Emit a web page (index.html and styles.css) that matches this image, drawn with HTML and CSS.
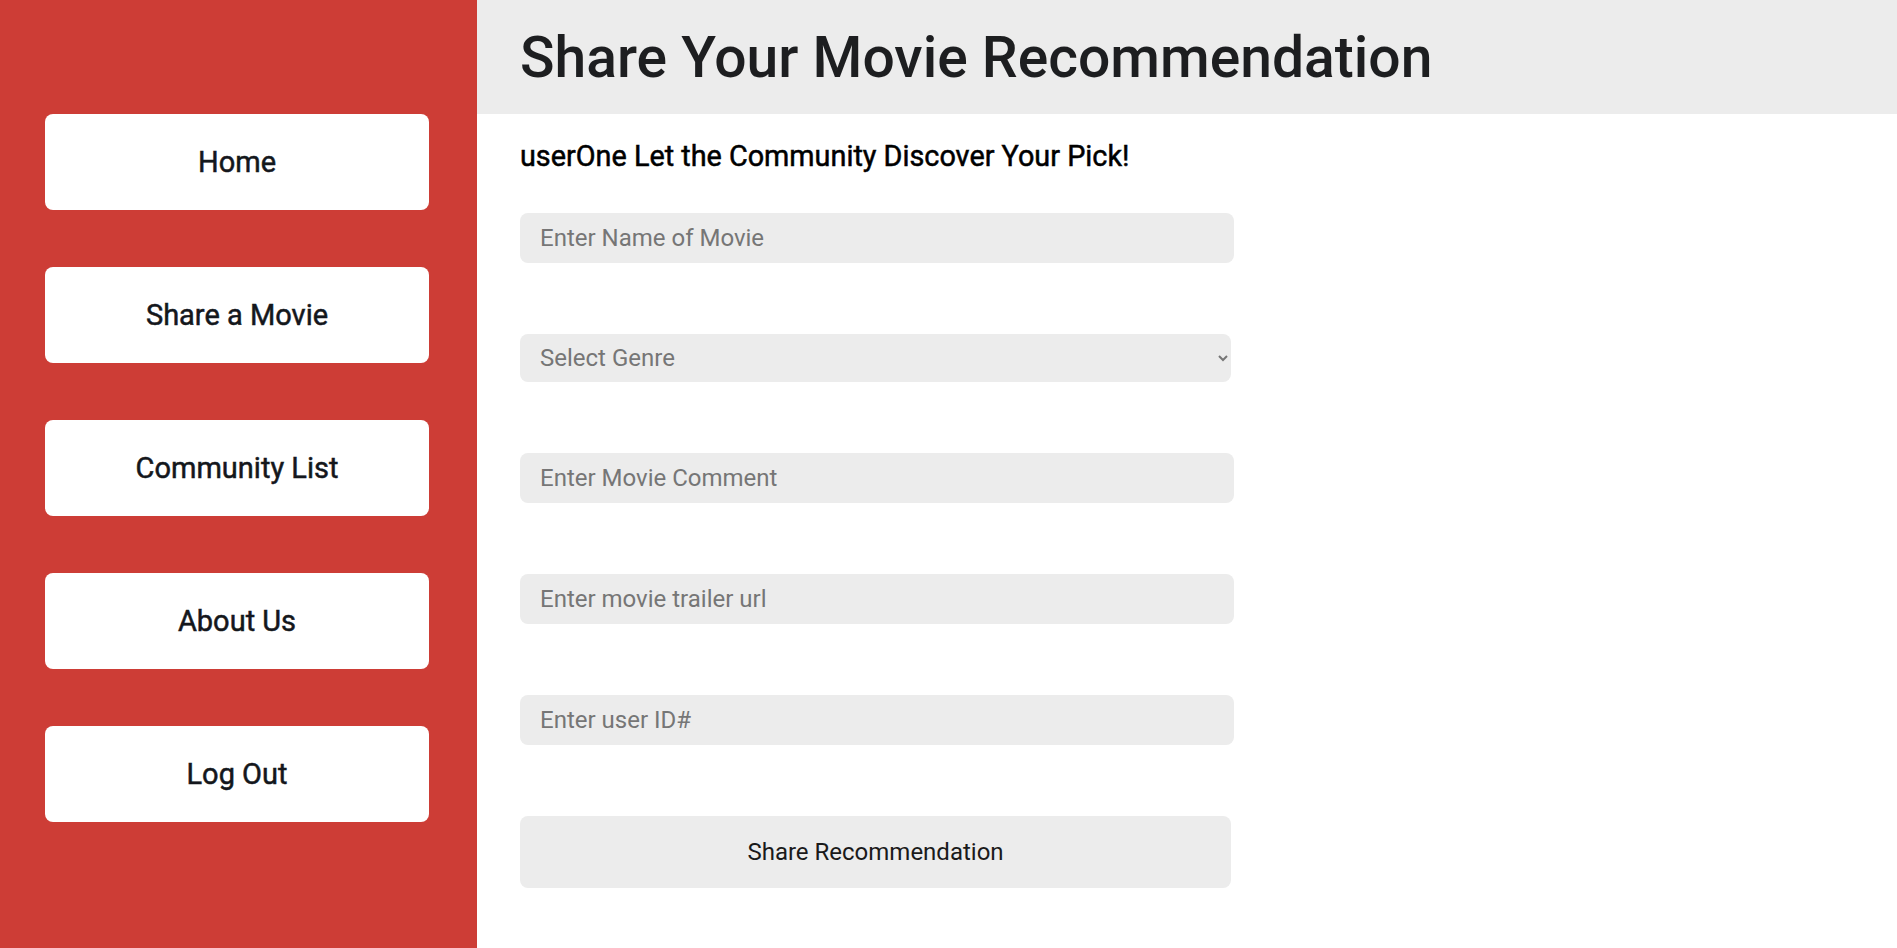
FILE: index.html
```html
<!DOCTYPE html>
<html lang="en">
<head>
<meta charset="utf-8">
<title>Share Your Movie Recommendation</title>
<link rel="stylesheet" href="styles.css">
</head>
<body>
<div class="layout">
  <nav class="sidebar">
    <a class="nav-btn" href="#">Home</a>
    <a class="nav-btn" href="#">Share a Movie</a>
    <a class="nav-btn" href="#">Community List</a>
    <a class="nav-btn" href="#">About Us</a>
    <a class="nav-btn" href="#">Log Out</a>
  </nav>
  <main class="main">
    <header class="page-header">
      <h1 class="title">Share Your Movie Recommendation</h1>
    </header>
    <section class="content">
      <h2 class="subtitle">userOne Let the Community Discover Your Pick!</h2>
      <form class="form">
        <input class="field" type="text" placeholder="Enter Name of Movie">
        <select class="field select">
          <option>Select Genre</option>
        </select>
        <input class="field" type="text" placeholder="Enter Movie Comment">
        <input class="field" type="text" placeholder="Enter movie trailer url">
        <input class="field" type="text" placeholder="Enter user ID#">
        <button class="submit" type="button">Share Recommendation</button>
      </form>
    </section>
  </main>
</div>
</body>
</html>
```

FILE: styles.css
```css
* { box-sizing: border-box; }
html, body {
  margin: 0;
  padding: 0;
  height: 100%;
}
body {
  font-family: Roboto, "Liberation Sans", sans-serif;
  background: #ffffff;
  color: #111;
}
.layout {
  display: flex;
  min-height: 948px;
}
.sidebar {
  width: 477px;
  flex: 0 0 477px;
  background: #cd3d36;
  display: flex;
  flex-direction: column;
  gap: 57px;
  padding: 114px 0 0 45px;
}
.nav-btn {
  display: flex;
  align-items: center;
  justify-content: center;
  width: 384px;
  height: 96px;
  background: #ffffff;
  border-radius: 8px;
  color: #14171c;
  text-decoration: none;
  font-size: 29px;
  font-weight: 400;
  -webkit-text-stroke: 0.5px #14171c;
}
.main {
  flex: 1;
  display: flex;
  flex-direction: column;
}
.page-header {
  height: 114px;
  background: #ececec;
  display: flex;
  align-items: center;
  padding-left: 43px;
}
.title {
  margin: 0;
  font-size: 57px;
  font-weight: 500;
  color: #1d1e20;
  line-height: 1;
}
.content {
  padding: 0 0 0 43px;
}
.subtitle {
  margin: 24px 0 0 0;
  font-size: 28.8px;
  font-weight: 400;
  color: #000;
  line-height: 36px;
  -webkit-text-stroke: 0.5px #000;
}
.form {
  display: flex;
  flex-direction: column;
  align-items: flex-start;
  gap: 71px;
  margin-top: 39px;
}
.field {
  width: 714px;
  height: 50px;
  border: none;
  border-radius: 8px;
  background: #ececec;
  padding: 0 20px;
  font-family: Roboto, "Liberation Sans", sans-serif;
  font-size: 24px;
  color: #333;
  outline: none;
}
.field::placeholder {
  color: #767676;
}
.select {
  width: 711px;
  height: 48px;
  padding: 0 16px;
  color: #767676;
}
.submit {
  width: 711px;
  height: 72px;
  border: none;
  border-radius: 8px;
  background: #ececec;
  font-family: Roboto, "Liberation Sans", sans-serif;
  font-size: 24px;
  color: #1a1a1a;
}
```
